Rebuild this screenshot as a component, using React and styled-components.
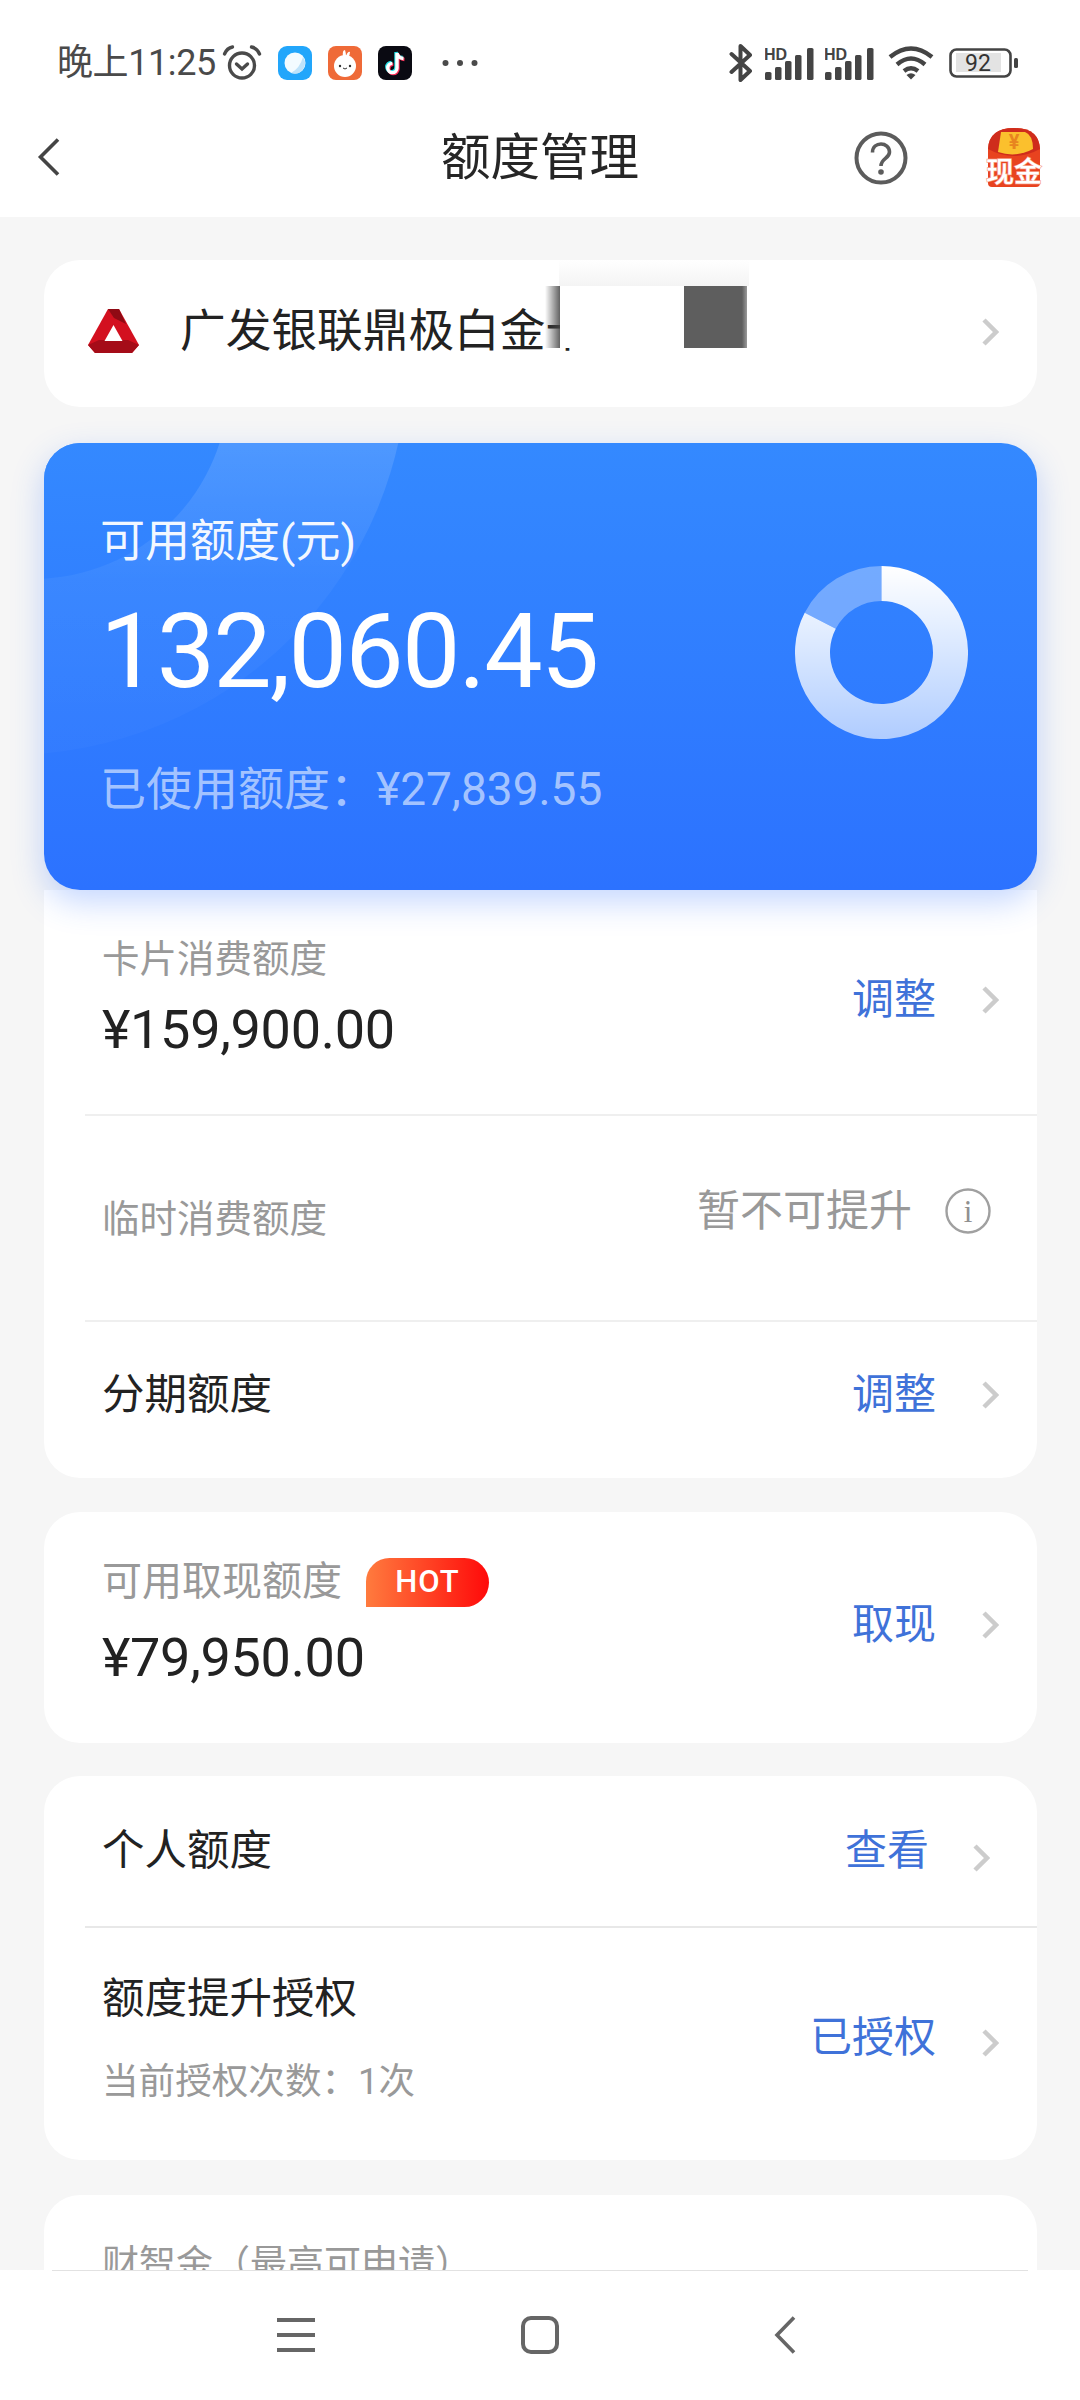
import React from "react";
import styled, { createGlobalStyle } from "styled-components";

const Global = createGlobalStyle`
  html, body { margin: 0; padding: 0; background: #f6f6f6; }
  * { box-sizing: border-box; }
  body { font-family: Roboto, "Noto Sans CJK SC", sans-serif; }
`;

const Page = styled.div`
  width: 1080px; height: 2400px; display: flex; flex-direction: column; overflow: hidden;
  background: #f6f6f6;
`;
const Top = styled.div`background: #fff; height: 217px; flex: none;`;
const StatusBar = styled.div`
  height: 94px; padding: 32px 62px 0 57px; display: flex; align-items: center; justify-content: space-between;
  color: #4a4a4a;
`;
const StatusGroup = styled.div`display: flex; align-items: center;`;
const Time = styled.span`font-size: 36px; line-height: 40px; font-weight: 400; margin-right: 6px; letter-spacing: -0.4px;`;
const Gap = styled.span`display: block; flex: none; width: ${p => p.$w}px;`;
const Header = styled.div`height: 123px; position: relative; display: flex; align-items: center; justify-content: center; padding-top: 4px;`;
const Title = styled.h1`margin: 0; font-size: 49.5px; font-weight: 400; color: #262626; line-height: 60px;`;
const HeaderIcons = styled.div`
  position: absolute; right: 37px; top: 2px; height: 100%; display: flex; align-items: center; gap: 75px;
`;
const HeaderBack = styled.div`position: absolute; left: 36px; top: 44px; display: flex;`;

const Main = styled.main`flex: 1; overflow: hidden; padding: 43px 43px 0 44px; display: flex; flex-direction: column;`;
const Card = styled.section`
  position: relative; flex: none; background: #fff; border-radius: ${p => (p.$flat ? "0 0 36px 36px" : "36px")}; margin-top: ${p => p.$mt || 0}px;
`;
const CardRow = styled.div`
  height: 147px; padding: 0 38px 3px 44px; display: flex; align-items: center;
`;
const LogoSlot = styled.div`display: flex; flex: none; margin-top: -3px;`;
const CardName = styled.div`
  margin-left: 41px; flex: 1; font-size: 45.7px; line-height: 60px; color: #222; font-weight: 400; white-space: nowrap;
`;
const Redaction = styled.div`
  position: absolute; left: 501px; top: 26px; width: 202px; height: 62px; display: flex;
`;
const BlurEdge = styled.div`width: 15px; background: linear-gradient(to right, rgba(80,80,80,0), rgba(70,70,70,.85));`;
const White = styled.div`width: 124px; background: #fff;`;
const Grey = styled.div`width: 63px; background: linear-gradient(to right, #5e5e5e 92%, #9a9a9a);`;
const Smudge = styled.div`
  position: absolute; left: 515px; top: 0; width: 190px; height: 26px;
  background: linear-gradient(to bottom, #fff, #f4f4f4);
`;

const BlueWrap = styled.div`position: relative; z-index: 2; flex: none; margin-top: 36px;`;
const BlueShadow = styled.div`
  position: absolute; inset: 0; border-radius: 36px;
  box-shadow: 0 12px 32px rgba(45,110,255,.28); pointer-events: none;
`;
const Blue = styled.section`
  position: relative; height: 447px; border-radius: 36px; overflow: hidden;
  background: linear-gradient(to bottom, #3489ff, #2c72ff);
  display: flex; justify-content: space-between; padding: 69px 69px 0 56px;
`;
const BigArc = styled.div`
  position: absolute; border-radius: 50%; left: -435px; top: -487px; width: 799px; height: 799px;
  background: linear-gradient(to bottom, rgba(255,255,255,.13) 61%, rgba(255,255,255,.045) 78%, rgba(255,255,255,.02) 100%);
`;
const SmallArc = styled.div`
  position: absolute; border-radius: 50%; left: -207px; top: -256px; width: 392px; height: 392px;
  background: linear-gradient(to bottom, #3489ff 65%, #3181ff 100%);
`;
const BlueCol = styled.div`position: relative; display: flex; flex-direction: column;`;
const BlueLabel = styled.div`font-size: 45px; line-height: 60px; color: rgba(255,255,255,.94); white-space: nowrap;`;
const BlueAmount = styled.div`
  margin-top: 25px; font-size: 104px; line-height: 110px; color: #fff; font-weight: 400; white-space: nowrap; letter-spacing: -1.8px;
`;
const BlueUsed = styled.div`
  margin-top: 52px; font-size: 46px; line-height: 60px; color: rgba(255,255,255,.58); white-space: nowrap;
`;
const Donut = styled.svg`position: relative; flex: none; margin-top: 54px; display: block;`;

const Row = styled.div`
  display: flex; align-items: center; justify-content: space-between;
  padding: ${p => p.$pt || 0}px ${p => p.$pr || 38}px ${p => p.$pb || 0}px 58px;
  height: ${p => (p.$h ? p.$h + "px" : "auto")};
`;
const Divider = styled.div`height: 2px; margin-left: 41px; background: ${p => p.$c || "#efefef"}; flex: none;`;
const Col = styled.div`display: flex; flex-direction: column;`;
const GreyLabel = styled.div`
  font-size: ${p => p.$fs || 37.5}px; line-height: 50px; color: #999; white-space: nowrap; display: flex; align-items: center;
`;
const Black42 = styled.div`font-size: 42.5px; line-height: 60px; color: #222; white-space: nowrap;`;
const Amount = styled.div`
  margin-top: ${p => p.$mt}px; font-size: 54px; line-height: 70px; color: #222; white-space: nowrap; letter-spacing: -0.3px;
`;
const Sub = styled.div`margin-top: 28px; font-size: 36.6px; line-height: 50px; color: #999; white-space: nowrap;`;
const Right = styled.div`display: flex; align-items: center; gap: ${p => p.$g || 45}px; margin-top: ${p => p.$mt || 0}px;`;
const Action = styled.span`font-size: 42px; line-height: 60px; color: #3f72d9; white-space: nowrap;`;
const Muted = styled.span`font-size: 43px; line-height: 60px; color: #999; white-space: nowrap;`;
const Hot = styled.span`
  margin-left: 24px; width: 123px; height: 49px; display: inline-flex; align-items: center; justify-content: center;
  border-radius: 24px 25px 25px 0; background: linear-gradient(to right, #ff7b3e, #ff0a0a);
  color: #fff; font-size: 31px; font-weight: 500; letter-spacing: 1px;
`;
const ClipLabel = styled.div`padding: 45px 0 0 58px; font-size: 37px; line-height: 50px; color: #999; height: 120px;`;

const Nav = styled.nav`
  flex: none; height: 130px; background: #fff; position: relative; display: flex; align-items: center;
  padding: 0 0 0 277px;
`;
const NavLine = styled.div`position: absolute; left: 52px; right: 52px; top: 0; height: 1px; background: #e2e2e2;`;

const Chevron = ({ color = "#ccc", w = 18, h = 28, sw = 4.5, dy = 0 }) => (
  <svg width={w} height={h} viewBox={`0 0 ${w} ${h}`} fill="none" style={{ flex: "none", marginTop: dy }}>
    <path d={`M3 2 L${w - 3} ${h / 2} L3 ${h - 2}`} stroke={color} strokeWidth={sw} />
  </svg>
);

const Alarm = () => (
  <svg width="40" height="36" viewBox="0 0 40 36" fill="none" stroke="#4a4a4a" strokeWidth="3.4" strokeLinecap="round">
    <circle cx="20" cy="20.5" r="12.5" />
    <path d="M14.5 19 L20 24 L25.5 19" />
    <path d="M2.5 9 Q5 3 10.5 2" />
    <path d="M37.5 9 Q35 3 29.5 2" />
  </svg>
);
const BlueApp = () => (
  <svg width="34" height="34" viewBox="0 0 34 34">
    <rect width="34" height="34" rx="9" fill="#22a6fb" />
    <circle cx="17" cy="17" r="10.5" fill="#f3fbff" />
    <path d="M25 11 A10.5 10.5 0 0 1 13 27 Q22 22 25 11Z" fill="#bfe3fa" />
  </svg>
);
const BunnyApp = () => (
  <svg width="34" height="34" viewBox="0 0 34 34">
    <rect width="34" height="34" rx="8" fill="#ef6a38" />
    <path d="M15 11 Q14 4 17 4 Q18 7 18 10 Q20 5 22 6 Q22 9 20 12Z" fill="#fff" />
    <circle cx="17" cy="20" r="11" fill="#fff" />
    <circle cx="12" cy="20" r="1.2" fill="#333" />
    <circle cx="22" cy="20" r="1.2" fill="#333" />
    <path d="M15 22 Q17 24 19 22" stroke="#333" strokeWidth="1" fill="none" />
  </svg>
);
const NotePath = "M19 7 V22 A4.6 4.6 0 1 1 14.4 17.4 M19 7 Q20 12 25.5 12.5";
const TikTok = () => (
  <svg width="34" height="34" viewBox="0 0 34 34" fill="none" strokeWidth="3.4">
    <rect width="34" height="34" rx="8" fill="#0a0a12" />
    <path d={NotePath} stroke="#25e0e6" transform="translate(-1 -1)" />
    <path d={NotePath} stroke="#fb2c55" transform="translate(1 1)" />
    <path d={NotePath} stroke="#fff" />
  </svg>
);
const Dots = () => (
  <svg width="36" height="8" viewBox="0 0 36 8" fill="#4a4a4a">
    <circle cx="3.5" cy="4" r="3" />
    <circle cx="18" cy="4" r="3" />
    <circle cx="32.5" cy="4" r="3" />
  </svg>
);
const Bluetooth = () => (
  <svg width="24" height="40" viewBox="0 0 24 40" fill="none" stroke="#444" strokeWidth="4" strokeLinejoin="round" strokeLinecap="round">
    <path d="M2.5 11 L21 28 L11.5 37 V3 L21 12 L2.5 29" />
  </svg>
);
const Signal = () => (
  <svg width="50" height="33" viewBox="0 0 50 33">
    <text x="-1" y="12.5" fontFamily="Liberation Sans, sans-serif" fontWeight="700" fontSize="16" fill="#444">HD</text>
    {[[0, 8], [10, 13], [20, 19], [30, 25], [42, 32]].map(([x, h]) => (
      <rect key={x} x={x} y={33 - h} width="6.5" height={h} rx="1.6" fill="#444" />
    ))}
  </svg>
);
const Wifi = () => (
  <svg width="46" height="34" viewBox="0 0 46 34" fill="none" stroke="#444" strokeWidth="4.4">
    <path d="M2 11 Q23 -6 44 11" />
    <path d="M9 18.5 Q23 6.5 37 18.5" />
    <path d="M16 25 Q23 19.5 30 25" />
    <path d="M23 33.5 L18.5 29 Q23 25.5 27.5 29Z" fill="#444" stroke="none" />
  </svg>
);
const Battery = () => (
  <svg width="69" height="30" viewBox="0 0 69 30">
    <rect x="1.5" y="1.5" width="60" height="27" rx="6" fill="none" stroke="#444" strokeWidth="2.6" />
    <rect x="7" y="5" width="45" height="19" fill="#e3e3e3" />
    <rect x="65" y="10" width="4" height="10" rx="1.5" fill="#444" />
    <text x="29" y="23" textAnchor="middle" fontFamily="Roboto, sans-serif" fontSize="23" fill="#333">92</text>
  </svg>
);
const Question = () => (
  <svg width="54" height="54" viewBox="0 0 54 54" fill="none" stroke="#5c5c5c" strokeWidth="4">
    <circle cx="27" cy="27" r="24.5" />
    <path d="M18.5 21.5 C18.5 10 35.5 10.5 35.5 21 C35.5 27.5 27 27.5 27 35" strokeWidth="3.6" />
    <circle cx="27" cy="41" r="2.8" fill="#5c5c5c" stroke="none" />
  </svg>
);
const RedPacket = () => (
  <svg width="60" height="62" viewBox="0 0 60 62" overflow="visible">
    <path d="M5 22 Q6 1 31 1 Q56 1 57 22 V56 Q57 60 53 60 H9 Q5 60 5 56Z" fill="#e8431f" />
    <path d="M5 22 Q6 1 31 1 Q56 1 57 22 Q31 36 5 22Z" fill="#cf2c1c" />
    <path d="M18 5 H42 Q50 8 50 22 Q33 31 15 25 Z" fill="#fbc02d" />
    <text x="31" y="22" textAnchor="middle" fontFamily="Roboto, sans-serif" fontWeight="700" fontSize="20" fill="#e8851f">¥</text>
    <text x="31" y="55" textAnchor="middle" fontFamily="Noto Sans CJK SC, sans-serif" fontSize="28" fontWeight="500" fill="#fff" stroke="#f7a28e" strokeWidth="1.4" paintOrder="stroke">现金</text>
  </svg>
);
const GfLogo = () => (
  <svg width="51" height="44" viewBox="0 0 51 44">
    <path d="M20 0 H31 L51 36 L44 44 H7 L0 36Z" fill="#d3101f" />
    <path d="M20 0 H31 L38 15 L26 9Z" fill="#8f0a14" />
    <path d="M0 36 L11 31 H40 L51 36 L44 44 H7Z" fill="#a50c18" />
    <path d="M25.5 16 L34.5 32 H16.5Z" fill="#fff" />
  </svg>
);
const InfoIcon = () => (
  <svg width="46" height="46" viewBox="0 0 46 46" fill="none">
    <circle cx="23" cy="23" r="21.5" stroke="#a0a0a0" strokeWidth="2.4" />
    <text x="23" y="34" textAnchor="middle" fontFamily="Liberation Serif, serif" fontSize="31" fill="#909090">i</text>
  </svg>
);

const arc = (cx, cy, r, a0, a1) => {
  const p = a => [cx + r * Math.sin((a * Math.PI) / 180), cy - r * Math.cos((a * Math.PI) / 180)];
  const [x0, y0] = p(a0);
  const [x1, y1] = p(a1);
  return `M${x0} ${y0} A${r} ${r} 0 ${a1 - a0 > 180 ? 1 : 0} 1 ${x1} ${y1}`;
};
const Ring = () => (
  <Donut width="173" height="173" viewBox="0 0 173 173" fill="none">
    <defs>
      <linearGradient id="ring" gradientUnits="userSpaceOnUse" x1="0" y1="0" x2="0" y2="173">
        <stop offset="0" stopColor="#fff" />
        <stop offset="1" stopColor="#fff" stopOpacity=".62" />
      </linearGradient>
    </defs>
    <path d={arc(86.5, 86.5, 69, 297.4, 360)} stroke="#fff" strokeOpacity=".32" strokeWidth="35" />
    <path d={arc(86.5, 86.5, 69, 0, 297.4)} stroke="url(#ring)" strokeWidth="35" />
  </Donut>
);

const NavMenu = () => (
  <svg width="38" height="34" viewBox="0 0 38 34" stroke="#666" strokeWidth="4">
    <path d="M0 2 H38 M0 17 H38 M0 32 H38" />
  </svg>
);
const NavHome = () => (
  <svg width="38" height="38" viewBox="0 0 38 38" fill="none" stroke="#666" strokeWidth="4">
    <rect x="2" y="2" width="34" height="34" rx="8" />
  </svg>
);
const NavBack = () => (
  <svg width="22" height="38" viewBox="0 0 22 38" fill="none" stroke="#666" strokeWidth="3.6">
    <path d="M20 1.5 L3 19 L20 36.5" />
  </svg>
);
const HeaderChevron = () => (
  <svg width="24" height="38" viewBox="0 0 24 38" fill="none" stroke="#444" strokeWidth="3.6">
    <path d="M22 1.5 L4.5 19 L22 36.5" />
  </svg>
);

export default function App() {
  return (
    <Page>
      <Global />
      <Top>
        <StatusBar>
          <StatusGroup>
            <Time>晚上11:25</Time>
            <Alarm />
            <Gap $w={16} />
            <BlueApp />
            <Gap $w={16} />
            <BunnyApp />
            <Gap $w={16} />
            <TikTok />
            <Gap $w={30} />
            <Dots />
          </StatusGroup>
          <StatusGroup>
            <Bluetooth />
            <Gap $w={12} />
            <Signal />
            <Gap $w={10} />
            <Signal />
            <Gap $w={13} />
            <Wifi />
            <Gap $w={15} />
            <Battery />
          </StatusGroup>
        </StatusBar>
        <Header>
          <HeaderBack><HeaderChevron /></HeaderBack>
          <Title>额度管理</Title>
          <HeaderIcons>
            <Question />
            <RedPacket />
          </HeaderIcons>
        </Header>
      </Top>
      <Main>
        <Card>
          <CardRow>
            <LogoSlot><GfLogo /></LogoSlot>
            <CardName>广发银联鼎极白金卡</CardName>
            <Chevron />
          </CardRow>
          <Smudge />
          <Redaction>
            <BlurEdge />
            <White />
            <Grey />
          </Redaction>
        </Card>

        <BlueWrap>
          <BlueShadow />
          <Blue>
            <BigArc />
            <SmallArc />
            <BlueCol>
              <BlueLabel>可用额度(元)</BlueLabel>
              <BlueAmount>132,060.45</BlueAmount>
              <BlueUsed>已使用额度：¥27,839.55</BlueUsed>
            </BlueCol>
            <Ring />
          </Blue>
        </BlueWrap>

        <Card $flat>
          <Row $pt={44} $pb={49}>
            <Col>
              <GreyLabel>卡片消费额度</GreyLabel>
              <Amount $mt={11}>¥159,900.00</Amount>
            </Col>
            <Right>
              <Action>调整</Action>
              <Chevron />
            </Right>
          </Row>
          <Divider />
          <Row $h={204} $pt={2} $pr={46}>
            <GreyLabel>临时消费额度</GreyLabel>
            <Right $g={33} $mt={-17}>
              <Muted>暂不可提升</Muted>
              <InfoIcon />
            </Right>
          </Row>
          <Divider />
          <Row $h={156} $pb={11}>
            <Black42>分期额度</Black42>
            <Right>
              <Action>调整</Action>
              <Chevron />
            </Right>
          </Row>
        </Card>

        <Card $mt={34}>
          <Row $pt={45} $pb={50}>
            <Col>
              <GreyLabel $fs={40}>可用取现额度<Hot>HOT</Hot></GreyLabel>
              <Amount $mt={16}>¥79,950.00</Amount>
            </Col>
            <Right>
              <Action>取现</Action>
              <Chevron />
            </Right>
          </Row>
        </Card>

        <Card $mt={33}>
          <Row $h={150} $pr={47}>
            <Black42>个人额度</Black42>
            <Right $g={43}>
              <Action>查看</Action>
              <Chevron dy={14} />
            </Right>
          </Row>
          <Divider $c="#e8e8e8" />
          <Row $pt={41} $pb={53}>
            <Col>
              <Black42>额度提升授权</Black42>
              <Sub>当前授权次数：1次</Sub>
            </Col>
            <Right>
              <Action>已授权</Action>
              <Chevron dy={10} />
            </Right>
          </Row>
        </Card>

        <Card $mt={35}>
          <ClipLabel>财智金（最高可申请）</ClipLabel>
        </Card>
      </Main>
      <Nav>
        <NavLine />
        <NavMenu />
        <Gap $w={206} />
        <NavHome />
        <Gap $w={215} />
        <NavBack />
      </Nav>
    </Page>
  );
}
